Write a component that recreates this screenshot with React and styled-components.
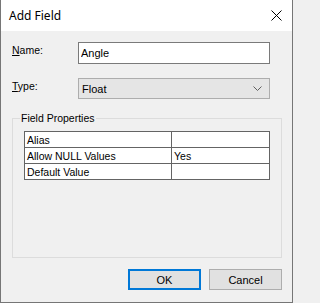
import React from 'react';
import styled, { createGlobalStyle } from 'styled-components';

const GlobalStyle = createGlobalStyle`
  html, body {
    margin: 0;
    padding: 0;
    background: #f0f0f0;
  }
  * {
    box-sizing: border-box;
  }
`;

const Window = styled.div`
  width: 293px;
  height: 303px;
  display: flex;
  flex-direction: column;
  background: #f0f0f0;
  border: 1px solid #767676;
  border-top: none;
  font-family: "Liberation Sans", Arial, sans-serif;
  font-size: 10.5px;
  color: #000;
`;

const TitleBar = styled.div`
  height: 31px;
  flex-shrink: 0;
  display: flex;
  align-items: center;
  justify-content: space-between;
  padding: 0 10px 1px 8px;
  background: #fff;
`;

const Title = styled.span`
  font-family: "Segoe UI", "Noto Sans", sans-serif;
  font-size: 12px;
  color: #000;
`;

const CloseButton = styled.button`
  width: 12px;
  height: 12px;
  padding: 0;
  border: none;
  background: transparent;
  display: flex;
  align-items: center;
  justify-content: center;
`;

const Body = styled.div`
  flex: 1;
  display: flex;
  flex-direction: column;
  padding: 11px 10px 12px 11px;
`;

const FieldRow = styled.div`
  display: grid;
  grid-template-columns: 66px 192px;
  align-items: start;
  margin-top: ${p => p.$gap || 0}px;
`;

const Label = styled.label`
  padding-top: 2px;
  line-height: 13px;
`;

const Mnemonic = styled.span`
  text-decoration: underline;
  text-underline-offset: 1px;
`;

const TextInput = styled.input`
  height: 22px;
  width: 100%;
  margin: 0;
  padding: 0 2px;
  border: 1px solid #7a7a7a;
  background: #fff;
  font-family: "Liberation Sans", Arial, sans-serif;
  font-size: 11px;
  color: #000;
  outline: none;
`;

const Select = styled.div`
  height: 21px;
  display: flex;
  align-items: center;
  justify-content: space-between;
  padding: 0 7px 0 3px;
  border: 1px solid #adadad;
  background: #e5e5e5;
  font-size: 11px;
`;

const GroupBox = styled.fieldset`
  margin: 13px 0 0;
  padding: 6px 11px 0;
  height: 146px;
  border: 1px solid #dcdcdc;
  min-width: 0;
`;

const Legend = styled.legend`
  margin-left: -4px;
  padding: 0 1px;
  line-height: 13px;
`;

const PropTable = styled.table`
  width: 100%;
  border-collapse: collapse;
  background: #fff;
`;

const Cell = styled.td`
  height: 16px;
  padding: 0 2px;
  border: 1px solid #646464;
  line-height: 14px;
  width: ${p => p.$w || 'auto'};
`;

const ButtonRow = styled.div`
  display: flex;
  justify-content: flex-end;
  gap: 8px;
  margin-top: auto;
`;

const Button = styled.button`
  width: 73px;
  height: 21px;
  margin: 0;
  padding: 0;
  background: #e1e1e1;
  border: ${p => (p.$default ? '2px solid #0078d7' : '1px solid #adadad')};
  font-family: "Liberation Sans", Arial, sans-serif;
  font-size: 11px;
  color: #000;
`;

const properties = [
  { name: 'Alias', value: '' },
  { name: 'Allow NULL Values', value: 'Yes' },
  { name: 'Default Value', value: '' },
];

export default function App() {
  return (
    <>
      <GlobalStyle />
      <Window>
        <TitleBar>
          <Title>Add Field</Title>
          <CloseButton aria-label="Close">
            <svg width="11" height="11" viewBox="0 0 11 11">
              <path d="M0.5 0.5L10.5 10.5M10.5 0.5L0.5 10.5" stroke="#000" strokeWidth="1" />
            </svg>
          </CloseButton>
        </TitleBar>
        <Body>
          <FieldRow>
            <Label><Mnemonic>N</Mnemonic>ame:</Label>
            <TextInput defaultValue="Angle" />
          </FieldRow>
          <FieldRow $gap={14}>
            <Label><Mnemonic>T</Mnemonic>ype:</Label>
            <Select>
              <span>Float</span>
              <svg width="9" height="5" viewBox="0 0 9 5">
                <path d="M0.5 0.5L4.5 4.5L8.5 0.5" stroke="#606060" fill="none" strokeWidth="1" />
              </svg>
            </Select>
          </FieldRow>
          <GroupBox>
            <Legend>Field Properties</Legend>
            <PropTable>
              <tbody>
                {properties.map(p => (
                  <tr key={p.name}>
                    <Cell $w="147px">{p.name}</Cell>
                    <Cell>{p.value}</Cell>
                  </tr>
                ))}
              </tbody>
            </PropTable>
          </GroupBox>
          <ButtonRow>
            <Button $default>OK</Button>
            <Button>Cancel</Button>
          </ButtonRow>
        </Body>
      </Window>
    </>
  );
}
